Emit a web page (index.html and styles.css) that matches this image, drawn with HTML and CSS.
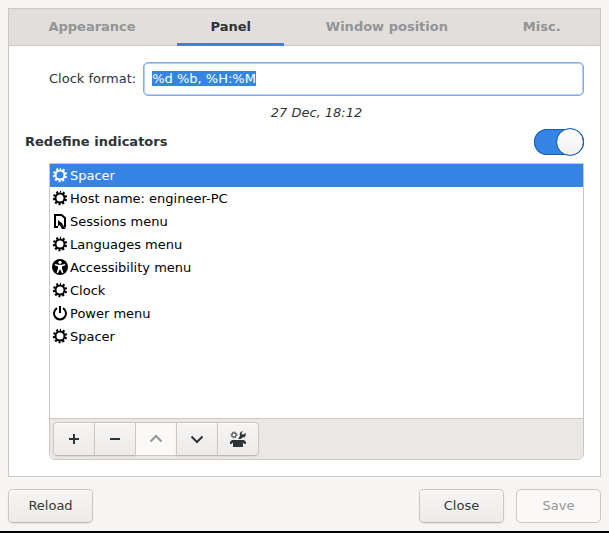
FILE: index.html
```html
<!DOCTYPE html>
<html lang="en">
<head>
<meta charset="utf-8">
<title>Greeter settings</title>
<link rel="stylesheet" href="styles.css">
</head>
<body>
<svg class="sprites" aria-hidden="true">
  <symbol id="gear" viewBox="0 0 16 16">
    <circle cx="8" cy="8" r="4.500" fill="none" stroke="currentColor" stroke-width="2"/>
    <circle cx="8" cy="8" r="6" fill="none" stroke="currentColor" stroke-width="2.400" stroke-dasharray="2 1.770" stroke-dashoffset="1" transform="rotate(-90 8 8)"/>
  </symbol>
  <symbol id="session" viewBox="0 0 16 16">
    <path d="M6 14H3V2h6.500L13 5v8.500h-1.500" fill="none" stroke="currentColor" stroke-width="2"/>
    <path d="M6 7v6.500l1.700-1.500L10 16h3.500L10.200 11.500h1.300z" fill="currentColor"/>
  </symbol>
  <symbol id="access" viewBox="0 0 16 16">
    <circle cx="8" cy="8" r="8" fill="currentColor"/>
    <circle cx="8" cy="3.3" r="1.6" fill="#fff"/>
    <path d="M3 5l3.4.8h3.2L13 5l.3 1.3L10 7.5v2l1.4 4.2-1.3.6L8.2 10.5h-.4l-1.9 3.8-1.3-.6L6 9.500V7.500L2.700 6.300z" fill="#fff"/>
  </symbol>
  <symbol id="power" viewBox="0 0 16 16">
    <path d="M5 3.200A6 6 0 1 0 11 3.200M8 1v7" fill="none" stroke="currentColor" stroke-width="2"/>
  </symbol>
  <symbol id="tools" viewBox="0 0 16 16">
    <circle cx="4" cy="4" r="2.100" fill="none" stroke="currentColor" stroke-width="1"/>
    <circle cx="4" cy="4" r="3" fill="none" stroke="currentColor" stroke-width="1" stroke-dasharray="1.200 1.156"/>
    <path d="M13 0L11.500 2.500l1.500 1.300L15.500 2c.9 2.500-.5 4.800-3.200 4.500L11 8H8l2-3C9 2.500 10.500.3 13 0z" fill="currentColor"/>
    <path d="M2 9h12l2 2v2h-1.500L13 11.500V16H3v-4.500L1.500 13H0v-2z" fill="currentColor"/>
  </symbol>
</svg>

<main class="notebook">
  <div class="tabs" role="tablist">
    <button class="tab" role="tab" type="button">Appearance</button>
    <button class="tab active" role="tab" type="button" aria-selected="true">Panel</button>
    <button class="tab" role="tab" type="button">Window position</button>
    <button class="tab" role="tab" type="button">Misc.</button>
  </div>
  <section class="page" role="tabpanel">
    <div class="field">
      <label class="label" for="format">Clock format:</label>
      <input class="entry" id="format" type="text" value="%d %b, %H:%M" spellcheck="false">
    </div>
    <p class="preview">27 Dec, 18:12</p>
    <div class="switch-row">
      <label class="label" for="redefine">Redefine indicators</label>
      <input class="switch" id="redefine" type="checkbox" role="switch" checked>
    </div>
    <div class="indicators">
      <ul class="list" role="listbox" aria-label="Indicators">
        <li class="row selected" role="option" aria-selected="true"><svg class="icon"><use href="#gear"/></svg>Spacer</li>
        <li class="row" role="option"><svg class="icon"><use href="#gear"/></svg>Host name: engineer-PC</li>
        <li class="row" role="option"><svg class="icon"><use href="#session"/></svg>Sessions menu</li>
        <li class="row" role="option"><svg class="icon"><use href="#gear"/></svg>Languages menu</li>
        <li class="row" role="option"><svg class="icon"><use href="#access"/></svg>Accessibility menu</li>
        <li class="row" role="option"><svg class="icon"><use href="#gear"/></svg>Clock</li>
        <li class="row" role="option"><svg class="icon"><use href="#power"/></svg>Power menu</li>
        <li class="row" role="option"><svg class="icon"><use href="#gear"/></svg>Spacer</li>
      </ul>
      <div class="toolbar">
        <button class="button tool" type="button" aria-label="Add"><svg class="icon" viewBox="0 0 16 16"><path d="M7 3h2v4h4v2H9v4H7V9H3V7h4z" fill="currentColor"/></svg></button>
        <button class="button tool" type="button" aria-label="Remove"><svg class="icon" viewBox="0 0 16 16"><path d="M3 7h10v2H3z" fill="currentColor"/></svg></button>
        <button class="button tool" type="button" aria-label="Move up" disabled><svg class="icon" viewBox="0 0 16 16"><path d="M2.500 10.500L8 5l5.500 5.500" fill="none" stroke="currentColor" stroke-width="2"/></svg></button>
        <button class="button tool" type="button" aria-label="Move down"><svg class="icon" viewBox="0 0 16 16"><path d="M2.500 5.500L8 11l5.500-5.500" fill="none" stroke="currentColor" stroke-width="2"/></svg></button>
        <button class="button tool" type="button" aria-label="Tools"><svg class="icon"><use href="#tools"/></svg></button>
      </div>
    </div>
  </section>
</main>
<footer class="actions">
  <button class="button" type="button">Reload</button>
  <button class="button close" type="button">Close</button>
  <button class="button" type="button" disabled>Save</button>
</footer>
<script src="script.js"></script>
</body>
</html>
```
FILE: styles.css
```css
* { box-sizing: border-box; }

body {
  display: flex;
  flex-direction: column;
  gap: 12px;
  min-height: 100vh;
  margin: 0;
  padding: 8px;
  border-bottom: 2px solid #000;
  background: #f6f5f4;
  color: #2e3436;
  font: 13px/17px "DejaVu Sans", sans-serif;
}

button, input { font: inherit; color: inherit; margin: 0; }

.sprites { position: absolute; width: 0; height: 0; }
.icon { display: block; width: 16px; height: 16px; flex: none; }

.notebook {
  flex: 1;
  display: flex;
  flex-direction: column;
  border: 1px solid #cdc7c2;
  background: #fff;
}

.tabs {
  display: flex;
  gap: 8px;
  padding: 0 6px;
  background: #e1dedb;
  box-shadow: inset 0 -1px #cdc7c2;
}
.tab {
  flex: 1 1 auto;
  height: 37px;
  padding: 0 0 2px;
  border: 0;
  background: none;
  color: #929595;
  font-weight: bold;
}
.tab.active { color: #2e3436; box-shadow: inset 0 -3px #3584e4; }

.page {
  flex: 1;
  display: flex;
  flex-direction: column;
  gap: 8px;
  padding: 16px;
}
.field {
  display: flex;
  align-items: center;
  gap: 7px;
  margin-left: 24px;
}
.label { padding-bottom: 2px; }
.entry {
  flex: 1;
  min-width: 0;
  height: 34px;
  padding: 0 8px 2px;
  border: 1px solid #84ace0;
  border-radius: 5px;
  outline: none;
  background: #fff;
  box-shadow: inset 0 0 0 1px #b0cff5;
}
.entry::selection { background: #3584e4; color: #fff; }
.preview {
  margin: 0 0 0 24px;
  text-align: center;
  font-style: italic;
}

.switch-row {
  display: flex;
  align-items: center;
  justify-content: space-between;
  font-weight: bold;
}
.switch {
  appearance: none;
  display: flex;
  align-items: center;
  width: 50px;
  height: 26px;
  border-radius: 13px;
  background: #3584e4;
  box-shadow: inset 0 0 0 1px #185fb4;
}
.switch::before {
  content: "";
  width: 26px;
  height: 26px;
  border: 1px solid #185fb4;
  border-radius: 50%;
  background: linear-gradient(#fff, #f1f0ef) padding-box;
}
.switch:checked { justify-content: flex-end; }

.indicators {
  flex: 1;
  display: flex;
  flex-direction: column;
  margin-left: 24px;
  border: 1px solid #cdc7c2;
  border-radius: 0 0 6px 6px;
}
.list {
  flex: 1;
  margin: 0;
  padding: 0;
  list-style: none;
  color: #000;
}
.row {
  display: flex;
  align-items: center;
  gap: 2px;
  height: 23px;
  padding: 0 2px;
}
.row .icon { margin-bottom: 1px; }
.row.selected { background: #3584e4; color: #fff; }

.toolbar {
  display: flex;
  padding: 3px;
  border-top: 1px solid #cdc7c2;
  border-radius: 0 0 5px 5px;
  background: #eae7e4;
}

.button {
  width: 85px;
  height: 34px;
  padding: 0 0 2px;
  border: 1px solid #cdc7c2;
  border-bottom-color: #bfb8b1;
  border-radius: 5px;
  background: linear-gradient(#f6f5f4, #edebe9);
  box-shadow: inset 0 1px #fff, 0 1px 2px rgba(0, 0, 0, .07);
  text-shadow: 0 1px #fff;
}
.button:disabled {
  border-color: #cdc7c2;
  background: #faf9f8;
  box-shadow: none;
  color: #929595;
}
.tool {
  display: grid;
  place-items: center;
  width: 41px;
  padding: 0;
  border-right-width: 0;
  border-radius: 0;
}
.tool:first-child { border-radius: 5px 0 0 5px; }
.tool:last-child { width: 42px; border-right-width: 1px; border-radius: 0 5px 5px 0; }

.actions { display: flex; gap: 12px; }
.close { margin-left: auto; }
```
FILE: script.js
```js
const format = document.getElementById("format");
format.focus();
format.select();
```
